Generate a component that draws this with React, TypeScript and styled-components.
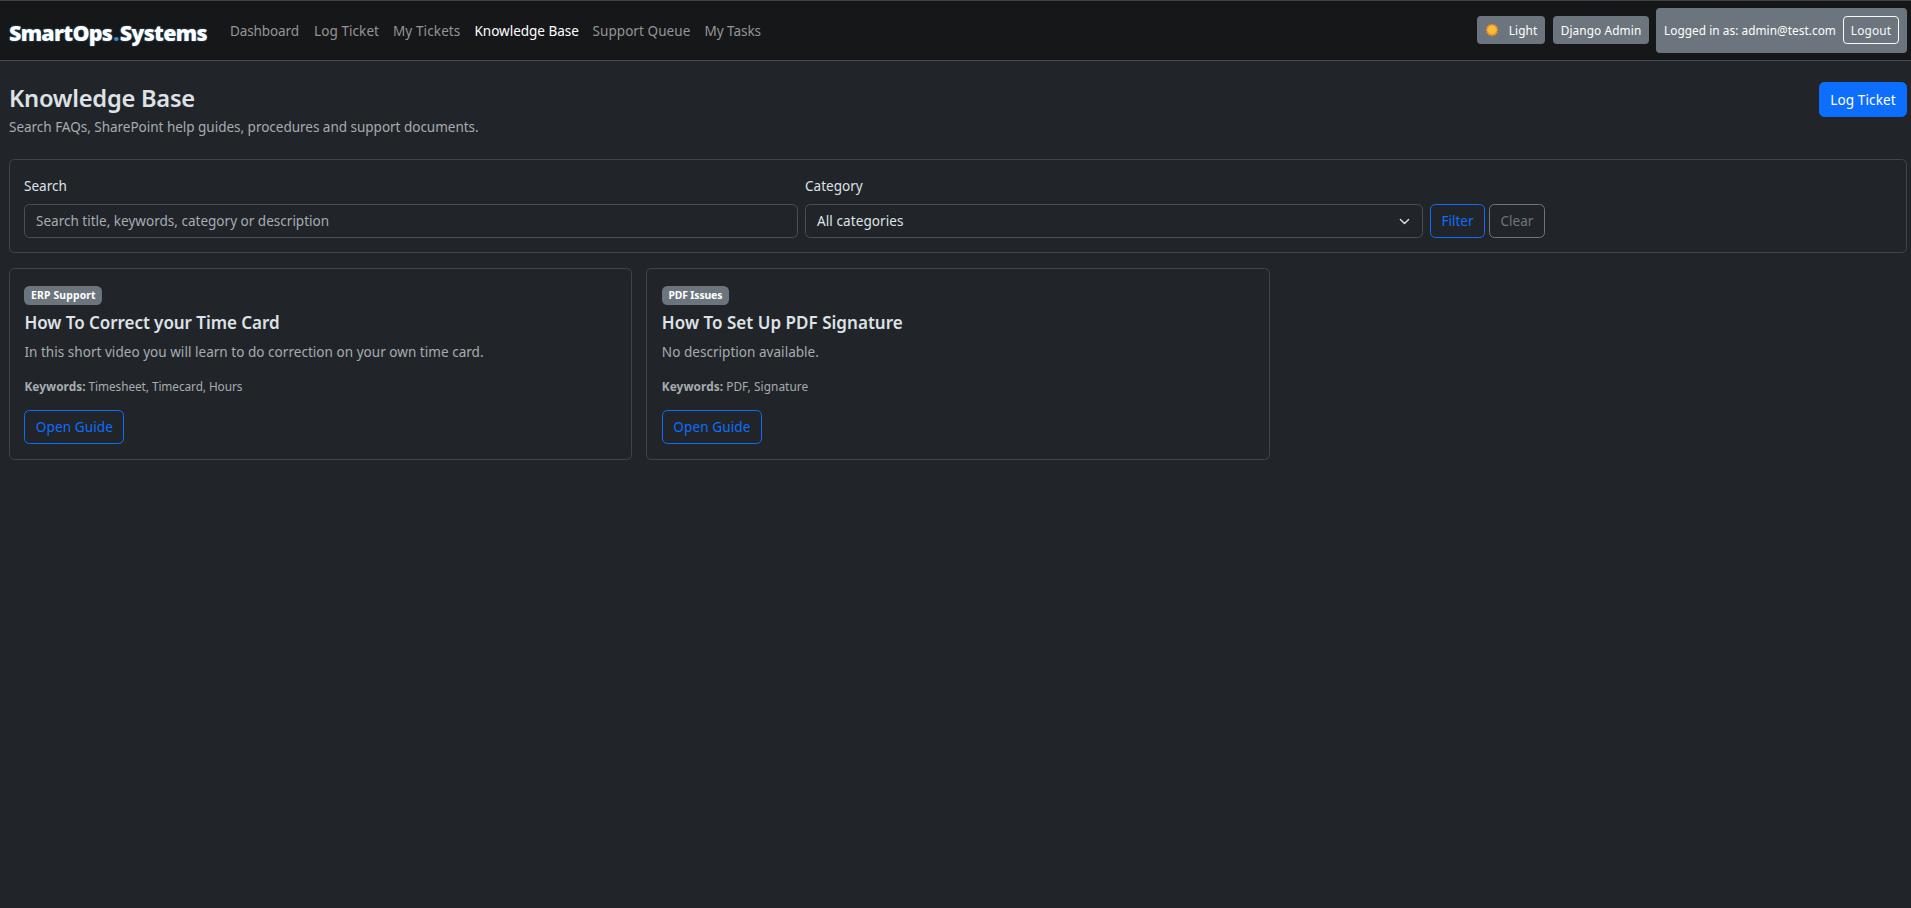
import React from 'react';
import styled, { createGlobalStyle } from 'styled-components';

const GlobalStyle = createGlobalStyle`
  *, *::before, *::after { box-sizing: border-box; }
  body {
    margin: 0;
    background: #212529;
    color: #dee2e6;
    font-family: 'Noto Sans', 'Open Sans', sans-serif;
    font-size: 13.54px;
    line-height: 22px;
  }
  a { color: inherit; text-decoration: none; }
  button, input { font: inherit; }
`;

interface Tracking {
  $track?: number;
}

const Navbar = styled.header`
  display: flex;
  align-items: center;
  height: 61px;
  padding: 0 4px 0 9px;
  background: #161719;
  border-top: 1px solid #414446;
  border-bottom: 1px solid #454b53;
`;

const Brand = styled.a`
  width: 214px;
  margin-top: 5px;
  color: #fff;
  font-size: 21.4px;
  font-weight: 900;
  letter-spacing: -0.7px;
  line-height: 30px;
  white-space: nowrap;
  text-shadow: 0 0 2px #3f7c98;
`;

const BrandDot = styled.span`
  margin: 0 1px;
  color: #2f8fe6;
  text-shadow: none;
`;

const NavLinks = styled.nav`
  display: flex;
  flex: 1;
  padding-left: 7px;
`;

const NavLink = styled.a<Tracking & { $width: number; $active?: boolean }>`
  width: ${(p) => p.$width}px;
  color: ${(p) => (p.$active ? '#fff' : '#949596')};
  letter-spacing: ${(p) => p.$track ?? 0}px;
  white-space: nowrap;
`;

const NavActions = styled.div`
  display: flex;
  align-items: center;
  font-size: 11.84px;
  color: #fff;
`;

const Pill = styled.button<Tracking & { $width: number; $gap: number }>`
  display: flex;
  align-items: center;
  justify-content: center;
  width: ${(p) => p.$width}px;
  height: 28px;
  margin: 0 ${(p) => p.$gap}px 2px 0;
  padding: 0;
  border: 0;
  border-radius: 4px;
  background: #6c757d;
  color: #fff;
  letter-spacing: ${(p) => p.$track ?? 0}px;
  white-space: nowrap;
`;

const SunIcon = styled.svg`
  width: 14px;
  height: 14px;
  margin-right: 10px;
`;

const UserBox = styled.div`
  display: flex;
  align-items: center;
  justify-content: space-between;
  width: 251px;
  height: 45px;
  padding: 0 8px 2px;
  border-radius: 4px;
  background: #6c757d;
  letter-spacing: 0.04px;
  white-space: nowrap;
`;

const LogoutButton = styled.button`
  width: 56px;
  height: 28px;
  padding: 0;
  border: 1px solid #f8f9fa;
  border-radius: 4px;
  background: transparent;
  color: #f8f9fa;
  letter-spacing: 0.16px;
`;

const Page = styled.main`
  padding: 21px 4px 0 9px;
`;

const PageHeader = styled.div`
  display: flex;
  align-items: flex-start;
  justify-content: space-between;
  height: 77px;
`;

const PageTitle = styled.h1`
  margin: 1px 0 3px;
  font-size: 23.7px;
  font-weight: 600;
  line-height: 30px;
  letter-spacing: -0.25px;
`;

const Subtitle = styled.p`
  margin: 0;
  color: #a7acb1;
  letter-spacing: -0.03px;
`;

const Button = styled.button<Tracking & { $width: number; $tone?: 'primary' | 'outline' | 'muted' }>`
  width: ${(p) => p.$width}px;
  height: ${(p) => (p.$tone === 'primary' ? 35 : 34)}px;
  padding: 0;
  border: 1px solid ${(p) => (p.$tone === 'muted' ? '#6c757d' : '#0d6efd')};
  border-radius: 5.4px;
  background: ${(p) => (p.$tone === 'primary' ? '#0d6efd' : 'transparent')};
  color: ${(p) => (p.$tone === 'primary' ? '#fff' : p.$tone === 'muted' ? '#6c757d' : '#0d6efd')};
  letter-spacing: ${(p) => p.$track ?? 0}px;
  line-height: 22px;
  white-space: nowrap;
`;

const Panel = styled.section`
  border: 1px solid #414549;
  border-radius: 5.4px;
`;

const FilterPanel = styled(Panel)`
  display: grid;
  grid-template-columns: 774px 618px 1fr;
  column-gap: 7px;
  align-items: end;
  height: 94px;
  margin-bottom: 15px;
  padding: 14px;
`;

const Field = styled.label`
  display: flex;
  flex-direction: column;
  gap: 7px;
`;

const TextInput = styled.input`
  width: 100%;
  height: 34px;
  padding: 0 11px;
  border: 1px solid #495057;
  border-radius: 5.4px;
  outline: 0;
  background: #212529;
  color: #dee2e6;
  &::placeholder { color: #a7acb1; opacity: 1; }
`;

const SelectBox = styled.div`
  display: flex;
  align-items: center;
  justify-content: space-between;
  height: 34px;
  padding: 0 12px 0 11px;
  border: 1px solid #495057;
  border-radius: 5.4px;
  letter-spacing: 0.08px;
`;

const Chevron = styled.svg`
  width: 11px;
  height: 11px;
`;

const FilterActions = styled.div`
  display: flex;
  gap: 4px;
`;

const CardGrid = styled.div`
  display: grid;
  grid-template-columns: repeat(3, 1fr);
  gap: 14.4px;
`;

const Card = styled(Panel)`
  display: flex;
  flex-direction: column;
  align-items: flex-start;
  height: 192px;
  padding: 17px 14.4px 15px;
`;

const Badge = styled.span<Tracking & { $width: number }>`
  width: ${(p) => p.$width}px;
  height: 19px;
  border-radius: 5.4px;
  background: #6c757d;
  color: #fff;
  font-size: 10.4px;
  font-weight: 700;
  line-height: 18px;
  letter-spacing: ${(p) => p.$track ?? 0}px;
  text-align: center;
  white-space: nowrap;
`;

const CardTitle = styled.h2<Tracking>`
  margin: 7px 0;
  font-size: 17px;
  font-weight: 600;
  line-height: 22px;
  letter-spacing: ${(p) => p.$track ?? 0}px;
`;

const Description = styled.p`
  margin: 0 0 14px;
  color: #a7acb1;
  letter-spacing: 0.025px;
`;

const Keywords = styled.p<Tracking>`
  margin: 0 0 14px;
  color: #a7acb1;
  font-size: 11.84px;
  line-height: 19px;
  letter-spacing: ${(p) => p.$track ?? 0}px;
  strong { letter-spacing: 0.05px; }
`;

const links = [
  { label: 'Dashboard', width: 84, track: -0.12 },
  { label: 'Log Ticket', width: 79, track: 0.07 },
  { label: 'My Tickets', width: 81.5, track: 0.1 },
  { label: 'Knowledge Base', width: 118, track: -0.03, active: true },
  { label: 'Support Queue', width: 112, track: 0.05 },
  { label: 'My Tasks', width: 70, track: -0.05 },
];

const guides = [
  {
    category: 'ERP Support', badgeWidth: 78, badgeTrack: 0.16,
    title: 'How To Correct your Time Card', titleTrack: -0.05,
    description: 'In this short video you will learn to do correction on your own time card.',
    keywords: 'Timesheet, Timecard, Hours', keywordTrack: -0.08,
  },
  {
    category: 'PDF Issues', badgeWidth: 67, badgeTrack: -0.12,
    title: 'How To Set Up PDF Signature', titleTrack: 0.03,
    description: 'No description available.',
    keywords: 'PDF, Signature', keywordTrack: 0.07,
  },
];

const rays = Array.from({ length: 12 }, (_, i) => i * 30);

function Sun() {
  return (
    <SunIcon viewBox="0 0 14 14" aria-hidden="true">
      {rays.map((angle) => (
        <path key={angle} d="M5.3 2.4 7 .4 8.7 2.4Z" fill="#e8892b" transform={`rotate(${angle} 7 7)`} />
      ))}
      <circle cx="7" cy="7" r="5.4" fill="#f09a2c" />
      <circle cx="7" cy="6.8" r="4.3" fill="#fbbd35" />
    </SunIcon>
  );
}

export default function App() {
  return (
    <>
      <GlobalStyle />
      <Navbar>
        <Brand href="#">SmartOps<BrandDot>.</BrandDot>Systems</Brand>
        <NavLinks>
          {links.map((l) => (
            <NavLink key={l.label} href="#" $width={l.width} $track={l.track} $active={l.active}>{l.label}</NavLink>
          ))}
        </NavLinks>
        <NavActions>
          <Pill $width={68} $gap={8} $track={0.1}><Sun />Light</Pill>
          <Pill $width={96} $gap={7} $track={0.1}>Django Admin</Pill>
          <UserBox>
            <span>Logged in as: admin@test.com</span>
            <LogoutButton>Logout</LogoutButton>
          </UserBox>
        </NavActions>
      </Navbar>
      <Page>
        <PageHeader>
          <div>
            <PageTitle>Knowledge Base</PageTitle>
            <Subtitle>Search FAQs, SharePoint help guides, procedures and support documents.</Subtitle>
          </div>
          <Button $width={88} $tone="primary" $track={0.1}>Log Ticket</Button>
        </PageHeader>
        <FilterPanel>
          <Field>
            Search
            <TextInput placeholder="Search title, keywords, category or description" />
          </Field>
          <Field as="div">
            Category
            <SelectBox>
              All categories
              <Chevron viewBox="0 0 16 16" fill="none" stroke="#dee2e6" strokeWidth="2" strokeLinecap="round" strokeLinejoin="round">
                <path d="m2 5 6 6 6-6" />
              </Chevron>
            </SelectBox>
          </Field>
          <FilterActions>
            <Button $width={55}>Filter</Button>
            <Button $width={56} $tone="muted">Clear</Button>
          </FilterActions>
        </FilterPanel>
        <CardGrid>
          {guides.map((g) => (
            <Card key={g.title}>
              <Badge $width={g.badgeWidth} $track={g.badgeTrack}>{g.category}</Badge>
              <CardTitle $track={g.titleTrack}>{g.title}</CardTitle>
              <Description>{g.description}</Description>
              <Keywords $track={g.keywordTrack}><strong>Keywords:</strong> {g.keywords}</Keywords>
              <Button $width={100} $track={0.1}>Open Guide</Button>
            </Card>
          ))}
        </CardGrid>
      </Page>
    </>
  );
}
